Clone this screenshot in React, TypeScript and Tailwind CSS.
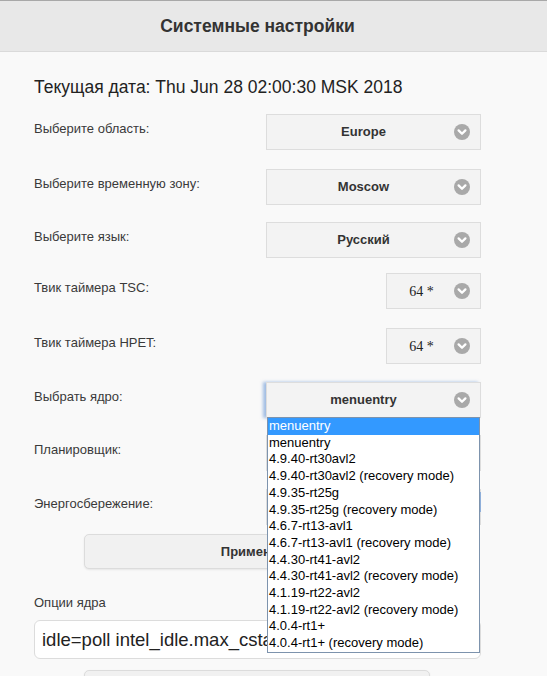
import React from 'react';

// --- ICON ---
const Chevron: React.FC = () => (
  <svg width="16" height="16" viewBox="0 0 16 16" className="absolute right-[10px] top-1/2 -translate-y-1/2">
    <circle cx="8" cy="8" r="8" fill="#a9a9a9" />
    <path d="M4.6 6.4 L8 9.8 L11.4 6.4" fill="none" stroke="#fff" strokeWidth="2.3" strokeLinecap="round" strokeLinejoin="round" />
  </svg>
);

// --- SELECT BOX ---
interface SelectProps {
  value: string;
  className?: string;
  serif?: boolean;
  children?: React.ReactNode;
}
const Select: React.FC<SelectProps> = ({ value, className = '', serif, children }) => (
  <div className={`relative h-[36px] bg-[#f3f3f3] border border-[#dddddd] flex items-center justify-center pr-[20px] ${className}`}>
    <span className={serif ? "font-['Liberation_Serif',serif] text-[14px] text-[#222] mr-[4px]" : "font-bold text-[13px] text-[#333]"}>{value}</span>
    <Chevron />
    {children}
  </div>
);

// --- ROW ---
interface RowProps {
  label: string;
  className?: string;
  children: React.ReactNode;
}
const Row: React.FC<RowProps> = ({ label, className = '', children }) => (
  <div className={`flex items-center justify-between h-[36px] ${className}`}>
    <span className="text-[13px] text-[#3a3a3a] pb-[6px]">{label}</span>
    {children}
  </div>
);

const KERNELS = [
  'menuentry',
  '4.9.40-rt30avl2',
  '4.9.40-rt30avl2 (recovery mode)',
  '4.9.35-rt25g',
  '4.9.35-rt25g (recovery mode)',
  '4.6.7-rt13-avl1',
  '4.6.7-rt13-avl1 (recovery mode)',
  '4.4.30-rt41-avl2',
  '4.4.30-rt41-avl2 (recovery mode)',
  '4.1.19-rt22-avl2',
  '4.1.19-rt22-avl2 (recovery mode)',
  '4.0.4-rt1+',
  '4.0.4-rt1+ (recovery mode)',
];

export default function App() {
  return (
    <div className="min-h-screen bg-[#f9f9f9] font-['Liberation_Sans',Arial,sans-serif] overflow-hidden">
      {/* header */}
      <div className="h-[52px] bg-[#e8e8e8] border-t border-[#a8a8a8] border-b border-b-[#dadada]">
        <div className="w-[515px] h-full flex items-center justify-center">
          <h1 className="text-[17.5px] font-bold text-[#333]">Системные настройки</h1>
        </div>
      </div>

      <div className="w-[515px] px-[34px]">
        <div className="mt-[25px] text-[17.5px] leading-[20px] text-[#222]">Текущая дата: Thu Jun 28 02:00:30 MSK 2018</div>

        <Row label="Выберите область:" className="mt-[17px]">
          <Select value="Europe" className="w-[215px]" />
        </Row>
        <Row label="Выберите временную зону:" className="mt-[19px]">
          <Select value="Moscow" className="w-[215px]" />
        </Row>
        <Row label="Выберите язык:" className="mt-[17px]">
          <Select value="Русский" className="w-[215px]" />
        </Row>
        <Row label="Твик таймера TSC:" className="mt-[15px]">
          <Select value="64 *" serif className="w-[95px]" />
        </Row>
        <Row label="Твик таймера HPET:" className="mt-[19px]">
          <Select value="64 *" serif className="w-[95px]" />
        </Row>
        <Row label="Выбрать ядро:" className="mt-[18px] relative z-10">
          <Select value="menuentry" className="w-[215px] shadow-[-3px_0_3px_rgba(90,140,210,0.55)]">
            {/* open dropdown list */}
            <div className="absolute left-0 top-[34px] w-[213px] bg-white border border-[#7d93ad] text-[13px] leading-[16.7px] text-black">
              <div className="bg-[#3399ff] text-white pl-px">menuentry</div>
              {KERNELS.map((k, i) => (
                <div key={i} className="pl-px whitespace-nowrap">{k}</div>
              ))}
            </div>
          </Select>
        </Row>
        <Row label="Планировщик:" className="mt-[17px]">
          <Select value="cfq" className="w-[215px]" />
        </Row>
        <Row label="Энергосбережение:" className="mt-[18px]">
          <Select value="Выкл" className="w-[215px]">
            <span className="absolute right-[-1px] top-[2px] h-[20px] w-[2px] bg-[#6d9bd8]/70"></span>
          </Select>
        </Row>

        <button className="mt-[9px] ml-[50px] w-[346px] h-[35px] bg-[#f1f1f1] border border-[#dcdcdc] rounded-[5px] shadow-[0_1px_2px_rgba(0,0,0,0.08)] text-[13px] font-bold text-[#333]">
          Применить
        </button>

        <div className="mt-[26px] text-[13px] leading-[16px] text-[#3a3a3a]">Опции ядра</div>
        <div className="mt-[9px] h-[39px] bg-white border border-[#dcdcdc] rounded-[6px] flex items-center px-[7px] overflow-hidden">
          <span className="text-[18.5px] text-[#222] whitespace-nowrap">idle=poll intel_idle.max_cstate=0 processor.max_cstate=0</span>
        </div>

        <button className="mt-[11px] ml-[50px] w-[346px] h-[35px] bg-[#f1f1f1] border border-[#dcdcdc] rounded-[5px] shadow-[0_1px_2px_rgba(0,0,0,0.08)] text-[13px] font-bold text-[#333]">
          Сохранить
        </button>
      </div>
    </div>
  );
}
